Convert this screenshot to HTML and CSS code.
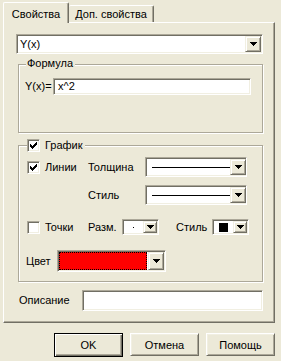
FILE: index.html
```html
<!DOCTYPE html>
<html lang="ru">
<head>
    <meta charset="UTF-8">
    <title>Свойства</title>
    <link rel="stylesheet" href="styles.css">
</head>
<body>
    <div class="tabs">
        <div class="tab tab-active">Свойства</div>
        <div class="tab">Доп. свойства</div>
    </div>

    <div class="panel">
        <div class="combo combo-func">
            <span class="combo-value">Y(x)</span>
            <span class="combo-btn"><svg width="7" height="4"><path d="M0 0h7v1h-1v1h-1v1h-1v1h-1v-1h-1v-1h-1v-1h-1z"/></svg></span>
        </div>

        <div class="group group-formula">
            <div class="group-title">Формула</div>
            <div class="formula-row">
                <span class="formula-label">Y(x)=</span>
                <span class="field formula-field">x^2</span>
            </div>
        </div>

        <div class="group group-graph">
            <div class="group-title">
                <span class="check checked"><svg width="7" height="7"><path d="M0 2h1v1h1v1h1v-1h1v-1h1v-1h1v-1h1v3h-1v1h-1v1h-1v1h-1v1h-1v-1h-1v-1h-1z"/></svg></span>
                <span>График</span>
            </div>

            <div class="row row-lines">
                <label class="cell-check">
                    <span class="check checked"><svg width="7" height="7"><path d="M0 2h1v1h1v1h1v-1h1v-1h1v-1h1v-1h1v3h-1v1h-1v1h-1v1h-1v1h-1v-1h-1v-1h-1z"/></svg></span>
                    <span>Линии</span>
                </label>
                <span class="cell-label">Толщина</span>
                <div class="combo combo-line">
                    <span class="combo-value"><i class="line-sample"></i></span>
                    <span class="combo-btn"><svg width="7" height="4"><path d="M0 0h7v1h-1v1h-1v1h-1v1h-1v-1h-1v-1h-1v-1h-1z"/></svg></span>
                </div>
            </div>

            <div class="row row-style">
                <span class="cell-check"></span>
                <span class="cell-label">Стиль</span>
                <div class="combo combo-line">
                    <span class="combo-value"><i class="line-sample"></i></span>
                    <span class="combo-btn"><svg width="7" height="4"><path d="M0 0h7v1h-1v1h-1v1h-1v1h-1v-1h-1v-1h-1v-1h-1z"/></svg></span>
                </div>
            </div>

            <div class="row row-points">
                <label class="cell-check">
                    <span class="check"></span>
                    <span>Точки</span>
                </label>
                <span class="cell-label size-label">Разм.</span>
                <div class="combo combo-small">
                    <span class="combo-value"><i class="dot-sample"></i></span>
                    <span class="combo-btn"><svg width="7" height="4"><path d="M0 0h7v1h-1v1h-1v1h-1v1h-1v-1h-1v-1h-1v-1h-1z"/></svg></span>
                </div>
                <span class="cell-label point-style-label">Стиль</span>
                <div class="combo combo-small">
                    <span class="combo-value"><i class="square-sample"></i></span>
                    <span class="combo-btn"><svg width="7" height="4"><path d="M0 0h7v1h-1v1h-1v1h-1v1h-1v-1h-1v-1h-1v-1h-1z"/></svg></span>
                </div>
            </div>

            <div class="row row-color">
                <span class="color-label">Цвет</span>
                <div class="combo combo-color">
                    <span class="color-value"></span>
                    <span class="combo-btn"><svg width="7" height="4"><path d="M0 0h7v1h-1v1h-1v1h-1v1h-1v-1h-1v-1h-1v-1h-1z"/></svg></span>
                </div>
            </div>
        </div>

        <div class="desc-row">
            <span class="desc-label">Описание</span>
            <span class="field desc-field"></span>
        </div>
    </div>

    <div class="buttons">
        <button class="btn btn-default">OK</button>
        <button class="btn">Отмена</button>
        <button class="btn">Помощь</button>
    </div>
</body>
</html>
```

FILE: styles.css
```css
* {
    box-sizing: border-box;
    margin: 0;
    padding: 0;
}

body {
    background: #ece9d8;
    font-family: 'Liberation Sans', Arial, sans-serif;
    font-size: 11px;
    line-height: 13px;
    color: #000;
}

/* tabs */

.tabs {
    display: flex;
    align-items: flex-end;
    height: 22px;
    padding-left: 3px;
}

.tab {
    position: relative;
    width: 85px;
    height: 17px;
    padding-top: 2px;
    text-align: center;
    background: #ece9d8;
    border-top: 1px solid #fff;
    border-right: 1px solid #716f64;
    box-shadow: inset -1px 0 #aca899;
    border-radius: 2px 2px 0 0;
}

.tab-active {
    z-index: 1;
    width: 66px;
    height: 21px;
    margin-bottom: -1px;
    padding-top: 5px;
    border-left: 1px solid #fff;
}

/* page of the tab */

.panel {
    width: 272px;
    height: 301px;
    margin-left: 3px;
    padding: 11px 0 0 12px;
    border-top: 1px solid #fff;
    border-left: 1px solid #fff;
    border-right: 1px solid #716f64;
    border-bottom: 1px solid #716f64;
    box-shadow: inset -1px -1px #aca899;
}

/* sunken controls */

.combo,
.field {
    display: flex;
    background: #fff;
    border-top: 1px solid #aca899;
    border-left: 1px solid #aca899;
    border-right: 1px solid #fff;
    border-bottom: 1px solid #fff;
    box-shadow: inset 1px 1px #716f64, inset -1px -1px #f1efe2;
    padding: 1px;
}

.combo-value {
    flex: 1;
    display: flex;
    align-items: center;
    padding-left: 2px;
}

.combo-btn {
    flex: none;
    width: 16px;
    display: flex;
    align-items: center;
    justify-content: center;
    background: #ece9d8;
    border-top: 1px solid #f1efe2;
    border-left: 1px solid #f1efe2;
    border-right: 1px solid #716f64;
    border-bottom: 1px solid #716f64;
    box-shadow: inset 1px 1px #fff, inset -1px -1px #aca899;
}

.combo-btn svg {
    display: block;
}

.combo-func {
    width: 247px;
    height: 20px;
}

.field {
    align-items: center;
    padding-left: 4px;
}

/* group boxes */

.group {
    width: 245px;
    margin-left: 2px;
    border: 1px solid #aca899;
    box-shadow: 1px 1px #fff, inset 1px 1px #fff;
}

.group-title {
    display: flex;
    align-items: center;
    gap: 5px;
    width: fit-content;
    height: 13px;
    margin-top: -8px;
    padding-right: 2px;
    background: #ece9d8;
}

.group-formula {
    height: 69px;
    margin-top: 10px;
    padding-left: 6px;
}

.group-formula .group-title {
    margin-left: 1px;
    padding-left: 1px;
}

.formula-row {
    display: flex;
    align-items: center;
    margin-top: 8px;
}

.formula-label {
    width: 28px;
}

.formula-field {
    width: 198px;
    height: 17px;
}

.group-graph {
    height: 137px;
    margin-top: 12px;
    padding-left: 8px;
}

.group-graph .group-title {
    margin-top: -7px;
}

/* check boxes */

.check {
    flex: none;
    width: 13px;
    height: 13px;
    display: flex;
    align-items: center;
    justify-content: center;
    background: #fff;
    border-top: 1px solid #aca899;
    border-left: 1px solid #aca899;
    border-right: 1px solid #fff;
    border-bottom: 1px solid #fff;
    box-shadow: inset 1px 1px #716f64, inset -1px -1px #f1efe2;
}

.check svg {
    display: block;
}

/* rows of the graph group */

.row {
    display: flex;
    align-items: center;
}

.cell-check {
    display: flex;
    align-items: center;
    gap: 5px;
    width: 61px;
}

.cell-label {
    width: 57px;
}

.row-lines {
    height: 20px;
    margin-top: 5px;
}

.row-style {
    height: 20px;
    margin-top: 8px;
}

.combo-line {
    width: 102px;
    height: 20px;
}

.line-sample {
    display: block;
    width: 78px;
    height: 1px;
    margin-left: 3px;
    background: #000;
}

.row-points {
    height: 16px;
    margin-top: 14px;
}

.size-label {
    width: 34px;
}

.point-style-label {
    width: 36px;
    margin-left: 17px;
}

.combo-small {
    width: 37px;
    height: 16px;
}

.combo-small .combo-btn {
    width: 14px;
}

.combo-small .combo-value {
    justify-content: center;
    padding-left: 0;
}

.dot-sample {
    display: block;
    width: 1px;
    height: 1px;
    background: #000;
}

.square-sample {
    display: block;
    width: 9px;
    height: 9px;
    background: #000;
}

.row-color {
    height: 22px;
    margin-top: 15px;
    margin-left: -1px;
}

.color-label {
    width: 31px;
}

.combo-color {
    width: 109px;
    height: 22px;
}

.color-value {
    flex: 1;
    margin-right: 1px;
    border: 1px dotted #000;
    background: #ff0000;
}

/* description */

.desc-row {
    display: flex;
    align-items: center;
    margin-top: 8px;
}

.desc-label {
    width: 66px;
    padding-left: 3px;
}

.desc-field {
    width: 181px;
    height: 21px;
}

/* dialog buttons */

.buttons {
    display: flex;
    justify-content: flex-end;
    gap: 7px;
    margin-top: 10px;
    padding-right: 6px;
}

.btn {
    width: 69px;
    height: 23px;
    font-family: inherit;
    font-size: 11px;
    color: #000;
    background: #ece9d8;
    border-top: 1px solid #fff;
    border-left: 1px solid #fff;
    border-right: 1px solid #716f64;
    border-bottom: 1px solid #716f64;
    box-shadow: inset 1px 1px #f1efe2, inset -1px -1px #aca899;
}

.btn-default {
    height: 24px;
    border: 1px solid #000;
    box-shadow: inset 1px 1px #fff, inset -1px -1px #716f64, inset -2px -2px #aca899;
}
```
